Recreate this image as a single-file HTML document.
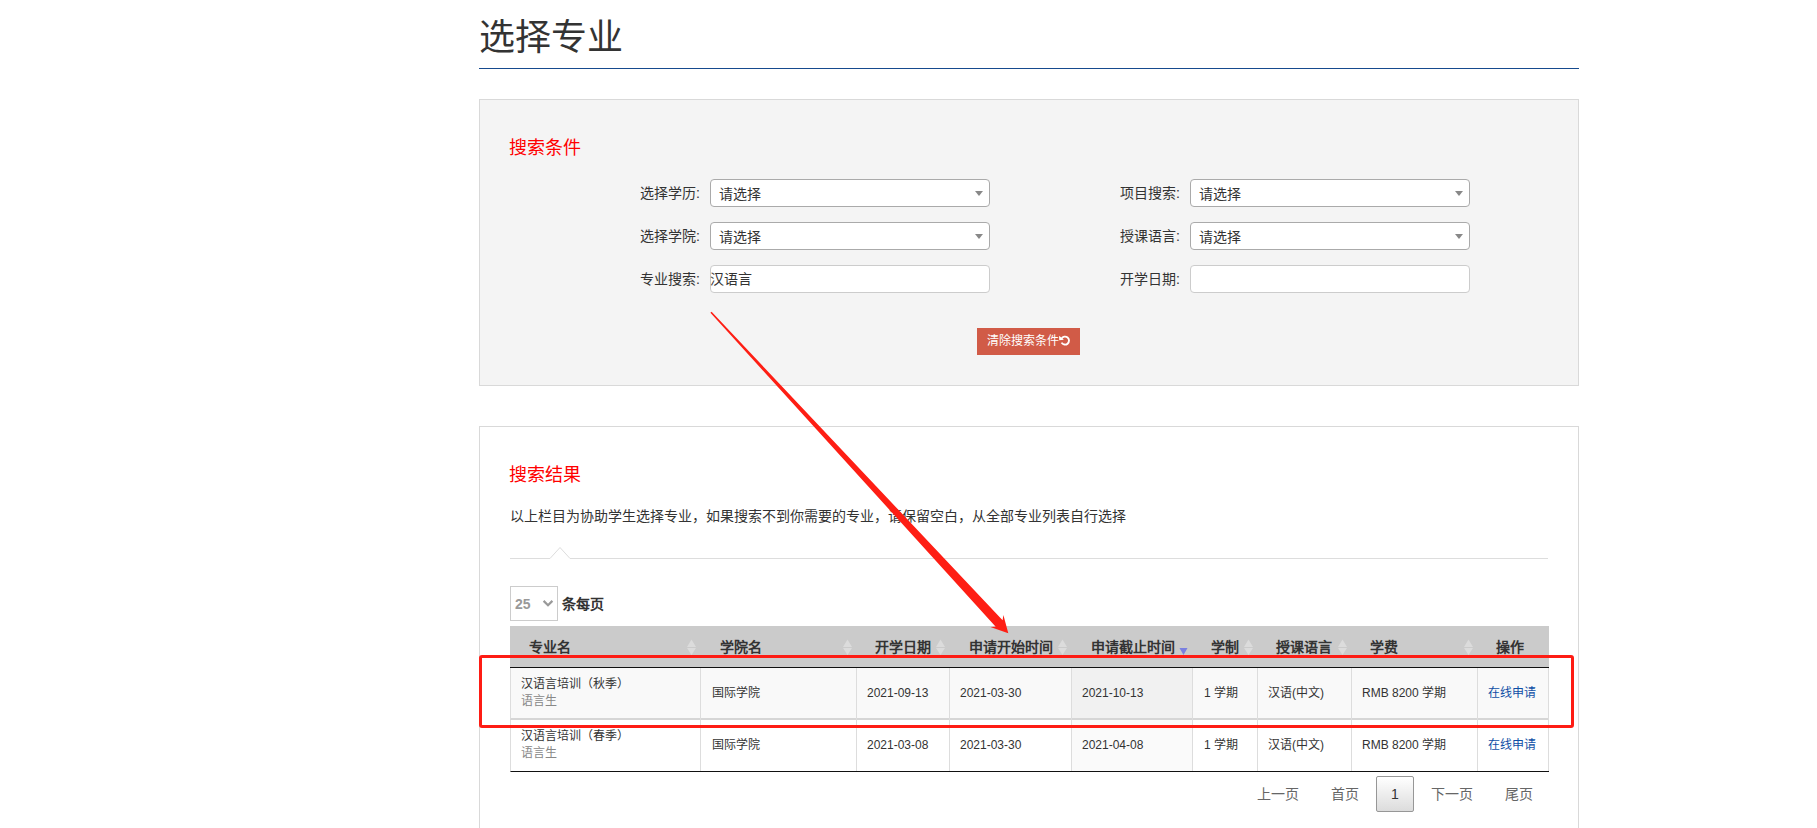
<!DOCTYPE html>
<html lang="zh-CN"><head><meta charset="utf-8">
<style>
*{box-sizing:border-box;margin:0;padding:0}
html,body{width:1817px;height:828px;overflow:hidden;background:#fff;font-family:"Liberation Sans",sans-serif;color:#333}
.a{position:absolute;white-space:nowrap}
.title{left:479px;top:14px;font-size:36px;line-height:48px;color:#333}
.bline{left:479px;top:68px;width:1100px;height:1px;background:#164a8e}
.box1{left:479px;top:99px;width:1100px;height:287px;border:1px solid #d9d9d9;background:#f4f4f4}
.box2{left:479px;top:426px;width:1100px;height:450px;border:1px solid #d9d9d9;background:#fff}
.h3{font-size:18px;line-height:24px;color:#f00}
.lbl{font-size:14px;line-height:20px;color:#333}
.sel{width:280px;height:28px;border:1px solid #aaa;border-radius:4px;background:#fff;font-size:14px;line-height:28px;padding-left:8px;color:#333}
.sel i{position:absolute;right:6px;top:11px;width:0;height:0;border-left:4px solid transparent;border-right:4px solid transparent;border-top:5px solid #888}
.inp{width:280px;height:28px;border:1px solid #ccc;border-radius:4px;background:#fff;font-size:14px;line-height:26px;padding-left:0;text-indent:-1px;color:#333}
.btn{left:977px;top:328px;width:103px;height:27px;background:#d15b47;color:#fff;font-size:12px;line-height:27px;padding-left:10px}
.desc{left:510px;top:506px;font-size:14px;line-height:20px;color:#333}
th,td{position:absolute}
.hd{left:510px;top:626px;width:1039px;height:42px;background:#cbcbcb;border-bottom:1px solid #111}
.ht{font-size:14px;font-weight:bold;line-height:20px;color:#333;top:637px}
.si{position:absolute;top:640px;width:9px;height:15px}
.row{left:510px;width:1039px;height:52px}
.cell{position:absolute;top:0;height:100%;border-right:1px solid #ddd;font-size:12px;line-height:17px;color:#333;padding:0 10px}
.c1{font-size:12px;line-height:17px;color:#333}
.pg{font-size:14px;line-height:20px;color:#666;top:784px}
</style></head><body>
<div class="a title">选择专业</div>
<div class="a bline"></div>

<div class="a box1"></div>
<div class="a h3" style="left:509px;top:136px">搜索条件</div>

<div class="a lbl" style="left:640px;top:183px">选择学历:</div>
<div class="a sel" style="left:710px;top:179px">请选择<i></i></div>
<div class="a lbl" style="left:640px;top:226px">选择学院:</div>
<div class="a sel" style="left:710px;top:222px">请选择<i></i></div>
<div class="a lbl" style="left:640px;top:269px">专业搜索:</div>
<div class="a inp" style="left:710px;top:265px">汉语言</div>

<div class="a lbl" style="left:1120px;top:183px">项目搜索:</div>
<div class="a sel" style="left:1190px;top:179px">请选择<i></i></div>
<div class="a lbl" style="left:1120px;top:226px">授课语言:</div>
<div class="a sel" style="left:1190px;top:222px">请选择<i></i></div>
<div class="a lbl" style="left:1120px;top:269px">开学日期:</div>
<div class="a inp" style="left:1190px;top:265px"></div>

<div class="a btn">清除搜索条件<svg style="position:absolute;left:82px;top:7px" width="12" height="13" viewBox="0 0 12 13"><path d="M2.54 3.6 A4 4 0 1 1 2.54 7.6" fill="none" stroke="#fff" stroke-width="1.9"/><path d="M0.1 0.7 L4.9 4.8 L0.2 5.3 Z" fill="#fff"/></svg></div>

<div class="a box2"></div>
<div class="a h3" style="left:509px;top:463px">搜索结果</div>
<div class="a desc">以上栏目为协助学生选择专业，如果搜索不到你需要的专业，请保留空白，从全部专业列表自行选择</div>
<svg class="a" style="left:0;top:0" width="1817" height="828"><polyline points="510,558.5 550,558.5 560,547.5 570,558.5 1548,558.5" fill="none" stroke="#ddd" stroke-width="1"/></svg>

<div class="a" style="left:510px;top:586px;width:48px;height:35px;border:1px solid #ccc;background:#fff"></div>
<div class="a" style="left:515px;top:594px;font-size:14px;font-weight:bold;line-height:20px;color:#999">25</div>
<svg class="a" style="left:542px;top:599px" width="12" height="9"><polyline points="1.6,1.9 6,6.2 10.4,1.9" fill="none" stroke="#999" stroke-width="2.2"/></svg>
<div class="a" style="left:562px;top:594px;font-size:14px;font-weight:bold;line-height:20px;color:#333">条每页</div>

<!-- table header -->
<div class="a hd"></div>
<div class="a ht" style="left:529px">专业名</div>
<div class="a ht" style="left:720px">学院名</div>
<div class="a ht" style="left:875px">开学日期</div>
<div class="a ht" style="left:969px">申请开始时间</div>
<div class="a ht" style="left:1091px">申请截止时间</div>
<div class="a ht" style="left:1211px">学制</div>
<div class="a ht" style="left:1276px">授课语言</div>
<div class="a ht" style="left:1370px">学费</div>
<div class="a ht" style="left:1496px">操作</div>

<!-- rows -->
<div class="a" style="left:510px;top:668px;width:1039px;height:52px;background:#f9f9f9;border-left:1px solid #ddd;border-bottom:2px solid #d6d6d6"></div>
<div class="a" style="left:1071px;top:668px;width:122px;height:50px;background:#f1f1f1"></div>
<div class="a" style="left:510px;top:720px;width:1039px;height:52px;background:#fff;border-left:1px solid #ddd;border-bottom:1px solid #111"></div>
<div class="a" style="left:1071px;top:720px;width:122px;height:51px;background:#fafafa"></div>

<svg class="a" style="left:0;top:0" width="1817" height="828" id="grid">
<g stroke="#ddd" stroke-width="1">
<line x1="700.5" y1="668" x2="700.5" y2="771"/>
<line x1="856.5" y1="668" x2="856.5" y2="771"/>
<line x1="949.5" y1="668" x2="949.5" y2="771"/>
<line x1="1071.5" y1="668" x2="1071.5" y2="771"/>
<line x1="1192.5" y1="668" x2="1192.5" y2="771"/>
<line x1="1257.5" y1="668" x2="1257.5" y2="771"/>
<line x1="1351.5" y1="668" x2="1351.5" y2="771"/>
<line x1="1477.5" y1="668" x2="1477.5" y2="771"/>
<line x1="1548.5" y1="668" x2="1548.5" y2="771"/>
</g>
<g fill="#dcdcdc">
<path d="M687 647 L691.5 639.5 L696 647 Z M687 648 L691.5 655 L696 648 Z"/>
<path d="M843 647 L847.5 639.5 L852 647 Z M843 648 L847.5 655 L852 648 Z"/>
<path d="M936 647 L940.5 639.5 L945 647 Z M936 648 L940.5 655 L945 648 Z"/>
<path d="M1058 647 L1062.5 639.5 L1067 647 Z M1058 648 L1062.5 655 L1067 648 Z"/>
<path d="M1244 647 L1248.5 639.5 L1253 647 Z M1244 648 L1248.5 655 L1253 648 Z"/>
<path d="M1338 647 L1342.5 639.5 L1347 647 Z M1338 648 L1342.5 655 L1347 648 Z"/>
<path d="M1464 647 L1468.5 639.5 L1473 647 Z M1464 648 L1468.5 655 L1473 648 Z"/>
</g>
<path d="M1179.5 648 L1187.5 648 L1183.5 655 Z" fill="#7a80e0"/>
</svg>

<div class="a c1" style="left:521px;top:676px">汉语言培训（秋季）</div>
<div class="a c1" style="left:521px;top:693px;color:#888">语言生</div>
<div class="a c1" style="left:712px;top:685px">国际学院</div>
<div class="a c1" style="left:867px;top:685px">2021-09-13</div>
<div class="a c1" style="left:960px;top:685px">2021-03-30</div>
<div class="a c1" style="left:1082px;top:685px">2021-10-13</div>
<div class="a c1" style="left:1204px;top:685px">1 学期</div>
<div class="a c1" style="left:1268px;top:685px">汉语(中文)</div>
<div class="a c1" style="left:1362px;top:685px">RMB 8200 学期</div>
<div class="a c1" style="left:1488px;top:685px;color:#0e4ea5">在线申请</div>

<div class="a c1" style="left:521px;top:728px">汉语言培训（春季）</div>
<div class="a c1" style="left:521px;top:745px;color:#888">语言生</div>
<div class="a c1" style="left:712px;top:737px">国际学院</div>
<div class="a c1" style="left:867px;top:737px">2021-03-08</div>
<div class="a c1" style="left:960px;top:737px">2021-03-30</div>
<div class="a c1" style="left:1082px;top:737px">2021-04-08</div>
<div class="a c1" style="left:1204px;top:737px">1 学期</div>
<div class="a c1" style="left:1268px;top:737px">汉语(中文)</div>
<div class="a c1" style="left:1362px;top:737px">RMB 8200 学期</div>
<div class="a c1" style="left:1488px;top:737px;color:#0e4ea5">在线申请</div>

<!-- pagination -->
<div class="a pg" style="left:1257px">上一页</div>
<div class="a pg" style="left:1331px">首页</div>
<div class="a" style="left:1376px;top:776px;width:38px;height:36px;border:1px solid #979797;border-radius:2px;background:linear-gradient(#fff,#dcdcdc);font-size:14px;line-height:34px;text-align:center;color:#333">1</div>
<div class="a pg" style="left:1431px">下一页</div>
<div class="a pg" style="left:1505px">尾页</div>

<!-- annotations -->
<div class="a" style="left:479px;top:655px;width:1095px;height:73px;border:3px solid #fe1c14;border-radius:3px"></div>
<svg class="a" style="left:0;top:0" width="1817" height="828"><polygon points="710.4,312.7 995.7,626.7 990.4,627.0 1008.3,633.3 1003.4,614.9 1002.6,620.3 711.6,311.7" fill="#fe1e14"/></svg>
</body></html>
